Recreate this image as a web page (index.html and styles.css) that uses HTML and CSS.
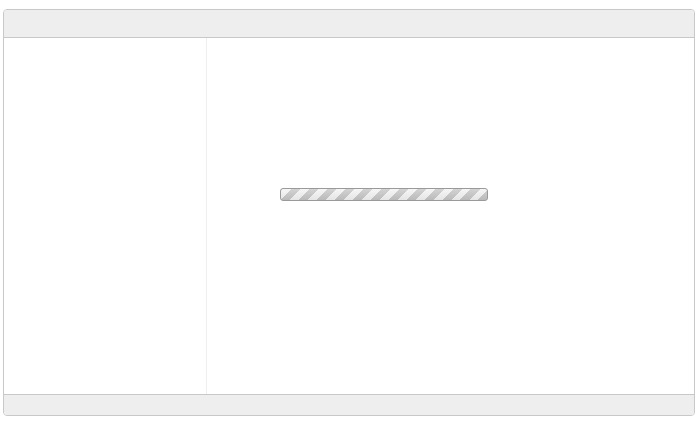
FILE: index.html
```html
<!DOCTYPE html>
<html>
<head>
<meta charset="utf-8">
<link rel="stylesheet" href="styles.css">
</head>
<body>
<div class="page">
  <div class="panel">
    <div class="header"></div>
    <div class="main">
      <div class="sidebar"></div>
      <div class="content">
        <div class="progress"></div>
      </div>
    </div>
    <div class="footer"></div>
  </div>
</div>
</body>
</html>
```
FILE: styles.css
```css
html, body {
  margin: 0;
  padding: 0;
  background: #ffffff;
  font-family: "Liberation Sans", Arial, sans-serif;
}
.page {
  padding: 9px 3px 0 3px;
}
.panel {
  width: 690px;
  height: 405px;
  border: 1px solid #c8c8c8;
  border-radius: 4px;
  display: flex;
  flex-direction: column;
  overflow: hidden;
  background: #ffffff;
}
.header {
  height: 27px;
  background: #eeeeee;
  border-bottom: 1px solid #c8c8c8;
  flex: none;
}
.main {
  flex: 1;
  display: flex;
}
.sidebar {
  width: 202px;
  border-right: 1px solid #eeeeee;
  flex: none;
}
.content {
  flex: 1;
  padding: 150px 0 0 73px;
}
.progress {
  width: 206px;
  height: 11px;
  border: 1px solid #9a9a9a;
  border-radius: 3px;
  background-color: #eeeeee;
  background-image:
    linear-gradient(to bottom, rgba(255,255,255,0.25), rgba(0,0,0,0.05)),
    repeating-linear-gradient(-45deg, #c4c4c4 0, #c4c4c4 6.4px, #f2f2f2 6.4px, #f2f2f2 12.7px);
}
.footer {
  height: 20px;
  background: #eeeeee;
  border-top: 1px solid #c8c8c8;
  flex: none;
}
```
